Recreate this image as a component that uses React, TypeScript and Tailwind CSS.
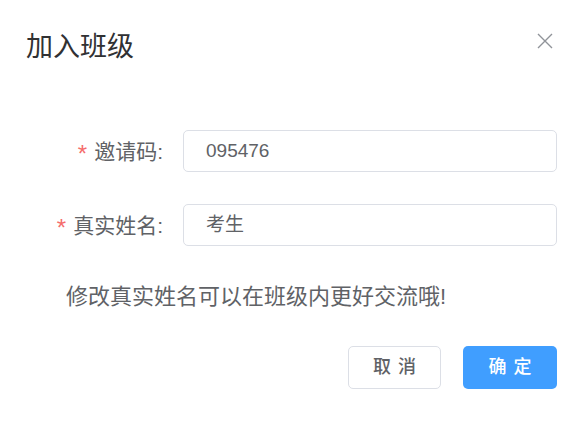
const font = { fontFamily: '"Liberation Sans", "Noto Sans CJK SC", sans-serif' };

export default function App() {
  return (
    <div className="w-[584px] h-[428px] bg-white text-[#606266]" style={font}>
      <div className="flex items-start justify-between pl-[26px] pr-[31px] pt-[30px]">
        <h3 className="text-[27px] leading-[34px] text-[#303133]">加入班级</h3>
        <button className="mt-[3px] text-[#909399]">
          <svg width="16" height="16" viewBox="0 0 16 16" fill="none" stroke="currentColor" strokeWidth="1.4">
            <path d="M1 1L15 15M15 1L1 15" />
          </svg>
        </button>
      </div>

      <div className="mt-[66px] flex flex-col gap-[32px]">
        <div className="flex items-center h-[42px]">
          <label className="w-[163px] h-[42px] flex items-center justify-end text-[21px] leading-none">
            <span className="text-[#f56c6c] text-[24px] leading-none mt-[6px] mr-[7px]">*</span>邀请码:
          </label>
          <div className="ml-[20px] w-[374px] h-[42px] border border-[#dcdfe6] rounded-[5px] flex items-center pl-[22px] text-[19px]">
            095476
          </div>
        </div>
        <div className="flex items-center h-[42px]">
          <label className="w-[163px] h-[42px] flex items-center justify-end text-[21px] leading-none">
            <span className="text-[#f56c6c] text-[24px] leading-none mt-[6px] mr-[7px]">*</span>真实姓名:
          </label>
          <div className="ml-[20px] w-[374px] h-[42px] border border-[#dcdfe6] rounded-[5px] flex items-center pl-[22px] text-[19px]">
            考生
          </div>
        </div>
      </div>

      <p className="mt-[37px] pl-[66px] text-[22px] leading-[27px]">修改真实姓名可以在班级内更好交流哦!</p>

      <div className="mt-[36px] flex justify-end gap-[22px] pr-[27px]">
        <button className="w-[93px] h-[43px] border border-[#dcdfe6] rounded-[5px] bg-white text-[18px] font-medium tracking-[7px] pl-[7px] text-[#606266]">
          取消
        </button>
        <button className="w-[94px] h-[43px] rounded-[5px] bg-[#409eff] text-white text-[18px] font-medium tracking-[7px] pl-[7px]">
          确定
        </button>
      </div>
    </div>
  );
}
